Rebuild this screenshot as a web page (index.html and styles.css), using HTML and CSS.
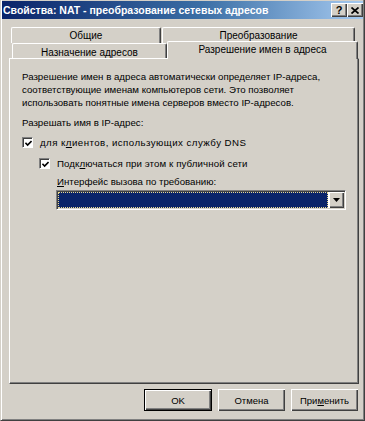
FILE: index.html
```html
<!DOCTYPE html>
<html lang="ru">
<head>
<meta charset="utf-8">
<title>Свойства: NAT</title>
<link rel="stylesheet" href="styles.css">
</head>
<body>
<div class="window">
  <div class="titlebar">
    <span class="title">Свойства: NAT - преобразование сетевых адресов</span>
    <div class="tbtns">
      <span class="tbtn help">?</span>
      <span class="tbtn close"><svg width="8" height="7" viewBox="0 0 8 7"><path d="M0.5 0.5 L7.5 6.5 M7.5 0.5 L0.5 6.5" stroke="#000" stroke-width="1.7" fill="none"/></svg></span>
    </div>
  </div>
  <div class="tabs">
    <div class="tabrow back">
      <div class="tab t1">Общие</div>
      <div class="tab t2">Преобразование</div>
    </div>
    <div class="tabrow front">
      <div class="tab t3">Назначение адресов</div>
      <div class="tab sel">Разрешение имен в адреса</div>
    </div>
  </div>
  <div class="panel">
    <p class="desc">Разрешение имен в адреса автоматически определяет IP-адреса, соответствующие именам компьютеров сети. Это позволяет использовать понятные имена серверов вместо IP-адресов.</p>
    <div class="line group">Разрешать имя в IP-адрес:</div>
    <div class="line chk c1"><span class="box"><svg width="7" height="7" viewBox="0 0 7 7"><polyline points="0.4,2.8 2.6,5 6.6,1" stroke="#000" stroke-width="1.7" fill="none"/></svg></span><span class="ctext">для к<u>л</u>иентов, использующих службу DNS</span></div>
    <div class="line chk c2"><span class="box"><svg width="7" height="7" viewBox="0 0 7 7"><polyline points="0.4,2.8 2.6,5 6.6,1" stroke="#000" stroke-width="1.7" fill="none"/></svg></span><span class="ctext">Подк<u>л</u>ючаться при этом к публичной сети</span></div>
    <div class="line lbl"><u>И</u>нтерфейс вызова по требованию:</div>
    <div class="combo">
      <div class="combo-field"></div>
      <div class="combo-btn"><svg width="7" height="4" viewBox="0 0 7 4"><polygon points="0,0 7,0 3.5,4" fill="#000"/></svg></div>
    </div>
  </div>
  <div class="actions">
    <button class="btn default">OK</button>
    <button class="btn">Отмена</button>
    <button class="btn">При<u>м</u>енить</button>
  </div>
</div>
</body>
</html>
```
FILE: styles.css
```css
html, body {
  margin: 0;
  padding: 0;
  width: 365px;
  height: 421px;
  overflow: hidden;
  background: #d4d0c8;
}

.window {
  box-sizing: border-box;
  width: 365px;
  height: 421px;
  background: #d4d0c8;
  border-left: 1px solid #d4d0c8;
  border-right: 1px solid #404040;
  border-bottom: 1px solid #404040;
  box-shadow: inset 1px 0 #ffffff, inset -1px -1px #808080;
  padding: 1px;
  font-family: "Liberation Sans", Arial, sans-serif;
  color: #000;
  display: flex;
  flex-direction: column;
}

.titlebar {
  height: 18px;
  display: flex;
  align-items: center;
  justify-content: space-between;
  background: linear-gradient(to right, #0a246a 0%, #3a6ea5 55%, #a6caf0 100%);
  padding-left: 1px;
}

.title {
  color: #fff;
  font-weight: bold;
  font-size: 10.5px;
  line-height: 18px;
  white-space: nowrap;
}

.tbtns {
  display: flex;
}

.tbtn {
  box-sizing: border-box;
  width: 16px;
  height: 14px;
  background: #d4d0c8;
  box-shadow: inset 1px 1px #ffffff, inset -1px -1px #404040, inset -2px -2px #808080;
  display: flex;
  align-items: center;
  justify-content: center;
  font-weight: bold;
  font-size: 11px;
  line-height: 14px;
}

.tbtn.help {
  padding-bottom: 1px;
}

.tabs {
  margin-top: 8px;
}

.tabrow {
  display: flex;
  align-items: flex-start;
}

.tabrow.back {
  height: 16px;
  padding-left: 9px;
  gap: 1px;
}

.tabrow.front {
  height: 15px;
  padding-left: 10px;
}

.tab {
  box-sizing: border-box;
  background: #d4d0c8;
  border-top: 1px solid #ffffff;
  border-left: 1px solid #ffffff;
  border-right: 1px solid #404040;
  box-shadow: inset -1px 0 #808080;
  border-radius: 2px 2px 0 0;
  text-align: center;
  font-size: 10px;
  white-space: nowrap;
}

.t1 {
  width: 150px;
  height: 16px;
  line-height: 15px;
}

.t2 {
  width: 193px;
  height: 16px;
  line-height: 15px;
}

.t3 {
  width: 155px;
  height: 15px;
  line-height: 17px;
}

.sel {
  position: relative;
  z-index: 1;
  width: 191px;
  height: 18px;
  margin-top: -2px;
  line-height: 16px;
}

.panel {
  box-sizing: border-box;
  width: 350px;
  height: 326px;
  margin-left: 7px;
  border-top: 1px solid #ffffff;
  border-left: 1px solid #ffffff;
  border-right: 1px solid #404040;
  border-bottom: 1px solid #404040;
  box-shadow: inset -1px -1px #808080;
  padding: 11px 12px 0 12px;
  font-size: 9.7px;
  line-height: 13px;
}

.desc {
  margin: 0;
  width: 312px;
}

.line {
  height: 13px;
  white-space: nowrap;
}

.group {
  margin-top: 7px;
}

.chk {
  display: flex;
  align-items: center;
}

.c1 {
  margin-top: 7px;
}

.c1 .ctext {
  letter-spacing: 0.45px;
}

.c2 {
  margin-top: 8px;
  margin-left: 17px;
}

.c2 .ctext {
  letter-spacing: 0.1px;
}

.box {
  box-sizing: border-box;
  width: 11px;
  height: 11px;
  margin-right: 7px;
  background: #fff;
  border-top: 1px solid #808080;
  border-left: 1px solid #808080;
  border-right: 1px solid #ffffff;
  border-bottom: 1px solid #ffffff;
  box-shadow: inset 1px 1px #404040;
  display: flex;
  align-items: center;
  justify-content: center;
  padding: 1px 0 0 1px;
}

.box svg {
  display: block;
}

.lbl {
  margin-top: 5px;
  margin-left: 35px;
}

.combo {
  box-sizing: border-box;
  width: 290px;
  height: 20px;
  margin-top: 2px;
  margin-left: 34px;
  background: #fff;
  border-top: 1px solid #808080;
  border-left: 1px solid #808080;
  border-right: 1px solid #ffffff;
  border-bottom: 1px solid #ffffff;
  box-shadow: inset 1px 1px #404040, inset -1px -1px #d4d0c8;
  padding: 1px;
  display: flex;
}

.combo-field {
  flex: 1;
  background: #0a246a;
  border: 1px dotted #e8d890;
  margin-right: 1px;
}

.combo-btn {
  box-sizing: border-box;
  width: 15px;
  background: #d4d0c8;
  box-shadow: inset 1px 1px #ffffff, inset -1px -1px #404040, inset -2px -2px #808080;
  display: flex;
  align-items: center;
  justify-content: center;
}

.combo-btn svg {
  display: block;
}

.actions {
  display: flex;
  justify-content: flex-end;
  gap: 6px;
  margin-top: 5px;
  padding-right: 5px;
}

.btn {
  box-sizing: border-box;
  width: 67px;
  height: 22px;
  margin: 0;
  padding: 0;
  border: none;
  background: #d4d0c8;
  box-shadow: inset 1px 1px #ffffff, inset -1px -1px #404040, inset -2px -2px #808080;
  font-family: "Liberation Sans", Arial, sans-serif;
  font-size: 9.5px;
  color: #000;
}

.btn.default {
  width: 68px;
  border: 1px solid #000;
}
```
